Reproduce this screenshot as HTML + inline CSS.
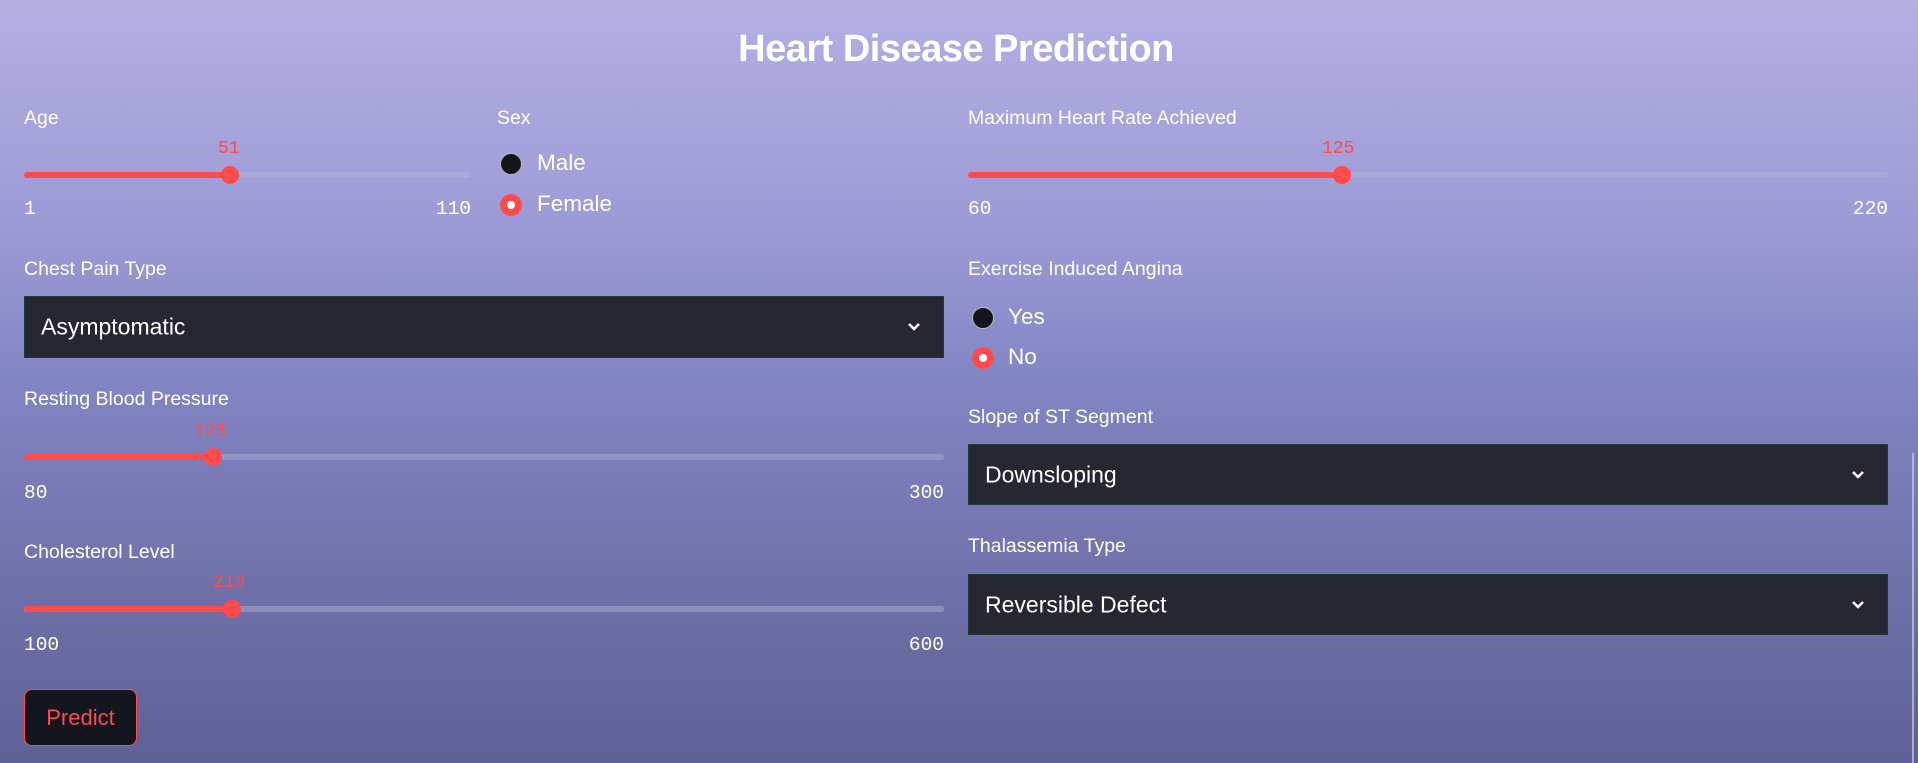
<!DOCTYPE html>
<html><head><meta charset="utf-8"><style>
html,body{margin:0;padding:0}
body{width:1918px;height:763px;overflow:hidden;position:relative;font-family:"Liberation Sans",sans-serif;color:#fff;
background:linear-gradient(180deg,#b4afe3 0%,#9c9ad6 30%,#8285c3 50%,#7474ae 72%,#5f6096 100%);}
.a{position:absolute;white-space:nowrap}
.lbl{font-size:19.5px;color:#fff}
.mono{font-family:"Liberation Mono",monospace;font-size:19.5px;color:#fff}
.r{text-align:right}
.val{font-family:"Liberation Mono",monospace;font-size:18px;color:#ff4b4b}
.track{position:absolute;height:6px;border-radius:3px;background:rgba(180,180,210,0.45)}
.fill{position:absolute;left:0;top:0;height:6px;border-radius:3px;background:#ff4b4b}
.thumb{position:absolute;width:18px;height:18px;border-radius:50%;background:#ff4b4b;top:-6px;margin-left:-9px}
.sel{position:absolute;background:#262730;border:1px solid #1e3a3a;box-sizing:border-box}
.sel span{position:absolute;left:16px;top:50%;transform:translateY(-50%);font-size:23px}
.sel svg{position:absolute;right:20px;top:50%;margin-top:-7px}
.radio{position:absolute;width:22px;height:22px;border-radius:50%;box-sizing:border-box}
.off{background:#14161f;border:1px solid #bbb}
.on{background:#ff4b4b}
.on:after{content:"";position:absolute;left:7px;top:7px;width:8px;height:8px;border-radius:50%;background:#fff}
.rt{font-size:22.5px}
</style></head><body>
<div class="a" style="left:0;width:1912px;top:28px;text-align:center;font-size:38px;font-weight:bold;letter-spacing:-0.5px">Heart Disease Prediction</div>

<div class="a lbl" style="left:24px;top:107px">Age</div>
<div class="a val" style="left:218px;top:139px">51</div>
<div class="track" style="left:24px;top:172px;width:447px"><div class="fill" style="width:206px"></div><div class="thumb" style="left:206px"></div></div>
<div class="a mono" style="left:24px;top:198px">1</div>
<div class="a mono r" style="left:371px;width:100px;top:198px">110</div>

<div class="a lbl" style="left:497px;top:107px">Sex</div>
<div class="radio off" style="left:500px;top:153px"></div><div class="a rt" style="left:537px;top:150px">Male</div>
<div class="radio on" style="left:500px;top:194px"></div><div class="a rt" style="left:537px;top:191px">Female</div>

<div class="a lbl" style="left:24px;top:258px">Chest Pain Type</div>
<div class="sel" style="left:24px;top:296px;width:920px;height:62px"><span>Asymptomatic</span><svg width="18" height="14" viewBox="0 0 18 14"><path d="M4 4l5 5 5-5" stroke="#fff" stroke-width="2.5" fill="none"/></svg></div>

<div class="a lbl" style="left:24px;top:388px">Resting Blood Pressure</div>
<div class="a val" style="left:194px;top:422px">125</div>
<div class="track" style="left:24px;top:454px;width:920px"><div class="fill" style="width:189px"></div><div class="thumb" style="left:189px"></div></div>
<div class="a mono" style="left:24px;top:482px">80</div>
<div class="a mono r" style="left:844px;width:100px;top:482px">300</div>

<div class="a lbl" style="left:24px;top:541px">Cholesterol Level</div>
<div class="a val" style="left:213px;top:573px">213</div>
<div class="track" style="left:24px;top:606px;width:920px"><div class="fill" style="width:208px"></div><div class="thumb" style="left:208px"></div></div>
<div class="a mono" style="left:24px;top:634px">100</div>
<div class="a mono r" style="left:844px;width:100px;top:634px">600</div>

<div class="a" style="left:24px;top:689px;width:113px;height:57px;box-sizing:border-box;border:1px solid #ff4b4b;border-radius:8px;background:#14161f;color:#ff4b4b;font-size:22px;text-align:center;line-height:55px">Predict</div>

<div class="a lbl" style="left:968px;top:107px">Maximum Heart Rate Achieved</div>
<div class="a val" style="left:1322px;top:139px">125</div>
<div class="track" style="left:968px;top:172px;width:920px"><div class="fill" style="width:374px"></div><div class="thumb" style="left:374px"></div></div>
<div class="a mono" style="left:968px;top:198px">60</div>
<div class="a mono r" style="left:1788px;width:100px;top:198px">220</div>

<div class="a lbl" style="left:968px;top:258px">Exercise Induced Angina</div>
<div class="radio off" style="left:972px;top:307px"></div><div class="a rt" style="left:1008px;top:304px">Yes</div>
<div class="radio on" style="left:972px;top:347px"></div><div class="a rt" style="left:1008px;top:344px">No</div>

<div class="a lbl" style="left:968px;top:406px">Slope of ST Segment</div>
<div class="sel" style="left:968px;top:444px;width:920px;height:61px"><span>Downsloping</span><svg width="18" height="14" viewBox="0 0 18 14"><path d="M4 4l5 5 5-5" stroke="#fff" stroke-width="2.5" fill="none"/></svg></div>

<div class="a lbl" style="left:968px;top:535px">Thalassemia Type</div>
<div class="sel" style="left:968px;top:574px;width:920px;height:61px"><span>Reversible Defect</span><svg width="18" height="14" viewBox="0 0 18 14"><path d="M4 4l5 5 5-5" stroke="#fff" stroke-width="2.5" fill="none"/></svg></div>

<div class="a" style="left:1912px;top:453px;width:2px;height:310px;background:rgba(220,220,235,0.6)"></div>
</body></html>
